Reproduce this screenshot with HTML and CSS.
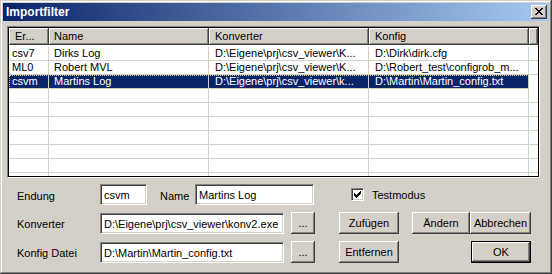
FILE: index.html
```html
<!DOCTYPE html>
<html>
<head>
<meta charset="utf-8">
<link rel="stylesheet" href="styles.css">
</head>
<body>
<div class="window">
  <div class="titlebar">
    <span class="title">Importfilter</span>
    <div class="close">
      <svg width="8" height="7" viewBox="0 0 8 7" shape-rendering="crispEdges"><path d="M0 0h2v1H0zM6 0h2v1H6zM1 1h2v1H1zM5 1h2v1H5zM2 2h4v1H2zM3 3h2v1H3zM2 4h4v1H2zM1 5h2v1H1zM5 5h2v1H5zM0 6h2v1H0zM6 6h2v1H6z" fill="#000"/></svg>
    </div>
  </div>
  <div class="list-outer">
    <div class="list">
      <div class="header">
        <div class="hcell c1">Er...</div>
        <div class="hcell c2">Name</div>
        <div class="hcell c3">Konverter</div>
        <div class="hcell c4">Konfig</div>
        <div class="hcell cfill"></div>
      </div>
      <div class="rows">
        <div class="row"><div class="cell c1">csv7</div><div class="cell c2">Dirks Log</div><div class="cell c3">D:\Eigene\prj\csv_viewer\K...</div><div class="cell c4">D:\Dirk\dirk.cfg</div></div>
        <div class="row"><div class="cell c1">ML0</div><div class="cell c2">Robert MVL</div><div class="cell c3">D:\Eigene\prj\csv_viewer\K...</div><div class="cell c4">D:\Robert_test\configrob_m...</div></div>
        <div class="row selected"><div class="cell c1">csvm</div><div class="cell c2">Martins Log</div><div class="cell c3">D:\Eigene\prj\csv_viewer\k...</div><div class="cell c4">D:\Martin\Martin_config.txt</div></div>
        <div class="row"><div class="cell c1"></div><div class="cell c2"></div><div class="cell c3"></div><div class="cell c4"></div></div>
        <div class="row"><div class="cell c1"></div><div class="cell c2"></div><div class="cell c3"></div><div class="cell c4"></div></div>
        <div class="row"><div class="cell c1"></div><div class="cell c2"></div><div class="cell c3"></div><div class="cell c4"></div></div>
        <div class="row"><div class="cell c1"></div><div class="cell c2"></div><div class="cell c3"></div><div class="cell c4"></div></div>
        <div class="row"><div class="cell c1"></div><div class="cell c2"></div><div class="cell c3"></div><div class="cell c4"></div></div>
        <div class="row"><div class="cell c1"></div><div class="cell c2"></div><div class="cell c3"></div><div class="cell c4"></div></div>
        <div class="row"><div class="cell c1"></div><div class="cell c2"></div><div class="cell c3"></div><div class="cell c4"></div></div>
      </div>
    </div>
  </div>
  <div class="form">
    <div class="frow r1">
      <span class="label">Endung</span>
      <div class="field f-endung">csvm</div>
      <span class="label l-name">Name</span>
      <div class="field f-name">Martins Log</div>
      <div class="checkbox">
        <svg width="7" height="7" viewBox="0 0 7 7" shape-rendering="crispEdges"><path d="M6 0h1v1H6zM5 1h2v1H5zM0 2h1v1H0zM4 2h3v1H4zM0 3h2v1H0zM3 3h3v1H3zM0 4h5v1H0zM1 5h3v1H1zM2 6h1v1H2z" fill="#000"/></svg>
      </div>
      <span class="cblabel">Testmodus</span>
    </div>
    <div class="frow r2">
      <span class="label">Konverter</span>
      <div class="field f-path">D:\Eigene\prj\csv_viewer\konv2.exe</div>
      <div class="btn b-dots">...</div>
      <div class="btn b-main">Zufügen</div>
      <div class="btn b-aendern">Ändern</div>
      <div class="btn b-abbr">Abbrechen</div>
    </div>
    <div class="frow r3">
      <span class="label">Konfig Datei</span>
      <div class="field f-path">D:\Martin\Martin_config.txt</div>
      <div class="btn b-dots">...</div>
      <div class="btn b-main">Entfernen</div>
      <div class="btn b-ok">OK</div>
    </div>
  </div>
</div>
</body>
</html>
```
FILE: styles.css
```css
html, body {
  margin: 0;
  padding: 0;
  background: #d4d0c8;
}
body {
  font-family: "Liberation Sans", Arial, sans-serif;
  font-size: 11px;
  color: #000;
}
.window {
  width: 552px;
  height: 274px;
  box-sizing: border-box;
  padding: 3px;
  background: #d4d0c8;
  box-shadow: inset -1px -1px #404040, inset 1px 1px #d4d0c8, inset -2px -2px #808080, inset 2px 2px #fff;
}
.titlebar {
  height: 18px;
  display: flex;
  align-items: center;
  justify-content: space-between;
  padding: 0 2px 0 3px;
  background: linear-gradient(to right, #0a246a, #a6caf0);
}
.title {
  color: #fff;
  font-weight: bold;
  font-size: 12px;
  line-height: 18px;
}
.close {
  width: 16px;
  height: 14px;
  box-sizing: border-box;
  background: #d4d0c8;
  box-shadow: inset -1px -1px #404040, inset 1px 1px #fff, inset -2px -2px #808080;
  display: flex;
  align-items: center;
  justify-content: center;
  padding: 0 0 1px 0;
}
.close svg { display: block; }
.list-outer {
  margin: 5px 0 0 4px;
  width: 533px;
  height: 152px;
  box-sizing: border-box;
  border: 1px solid;
  border-color: #808080 #fff #fff #808080;
}
.list {
  height: 100%;
  box-sizing: border-box;
  border: 1px solid #000;
  background: #fff;
  overflow: hidden;
}
.header {
  display: flex;
  height: 17px;
}
.hcell {
  box-sizing: border-box;
  height: 17px;
  line-height: 16px;
  background: #d4d0c8;
  box-shadow: inset -1px -1px #404040, inset 1px 1px #fff, inset -2px -2px #808080;
  white-space: nowrap;
  overflow: hidden;
  flex: none;
}
.c1 { width: 40px; }
.c2 { width: 160px; }
.c3 { width: 160px; }
.c4 { width: 160px; }
.hcell.c1 { padding-left: 6px; }
.hcell.c2 { padding-left: 5px; }
.hcell.c3, .hcell.c4 { padding-left: 6px; }
.cfill { flex: 1; }
.rows {
  padding-top: 2px;
}
.row {
  display: flex;
  height: 14px;
  box-sizing: border-box;
  border-bottom: 1px solid #d4d0c8;
}
.cell {
  box-sizing: border-box;
  height: 13px;
  line-height: 13px;
  border-right: 1px solid #d4d0c8;
  white-space: nowrap;
  overflow: hidden;
  flex: none;
}
.cell.c1 { padding-left: 3px; }
.cell.c2 { padding-left: 5px; }
.cell.c3, .cell.c4 { padding-left: 6px; }
.row.selected .cell {
  background: #0a246a;
  color: #fff;
}
.row.selected {
  width: 520px;
  outline: 1px dotted #d8d090;
  outline-offset: -1px;
}
.form {
  padding-left: 14px;
  margin-top: 6px;
}
.frow {
  display: flex;
  align-items: center;
  height: 22px;
}
.r1 { height: 21px; }
.r2 { margin-top: 7px; }
.r3 { margin-top: 7px; }
.label {
  width: 83px;
  flex: none;
  padding-top: 2px;
  white-space: nowrap;
}
.l-name {
  width: 35px;
  margin-left: 13px;
}
.field {
  height: 21px;
  box-sizing: border-box;
  background: #fff;
  border: 1px solid;
  border-color: #808080 #fff #fff #808080;
  box-shadow: inset 1px 1px #404040, inset -1px -1px #d4d0c8;
  padding: 3px 0 0 3px;
  line-height: 15px;
  white-space: nowrap;
  overflow: hidden;
  flex: none;
}
.f-endung { width: 47px; }
.f-name { width: 119px; }
.f-path { width: 184px; }
.checkbox {
  width: 13px;
  height: 13px;
  box-sizing: border-box;
  margin-left: 37px;
  background: #fff;
  border: 1px solid;
  border-color: #808080 #fff #fff #808080;
  box-shadow: inset 1px 1px #404040, inset -1px -1px #d4d0c8;
  padding: 2px 0 0 2px;
  flex: none;
}
.checkbox svg { display: block; }
.cblabel {
  margin-left: 8px;
  padding-top: 1px;
}
.btn {
  height: 22px;
  box-sizing: border-box;
  background: #d4d0c8;
  box-shadow: inset -1px -1px #404040, inset 1px 1px #fff, inset -2px -2px #808080;
  display: flex;
  align-items: center;
  justify-content: center;
  padding-bottom: 1px;
  flex: none;
}
.b-dots { width: 24px; margin-left: 7px; }
.b-main { width: 60px; margin-left: 24px; }
.b-aendern { width: 58px; margin-left: 13px; }
.b-abbr { width: 61px; }
.b-ok {
  width: 60px;
  margin-left: 72px;
  border: 1px solid #000;
  box-shadow: inset -1px -1px #404040, inset 1px 1px #fff, inset -2px -2px #808080;
}
```
